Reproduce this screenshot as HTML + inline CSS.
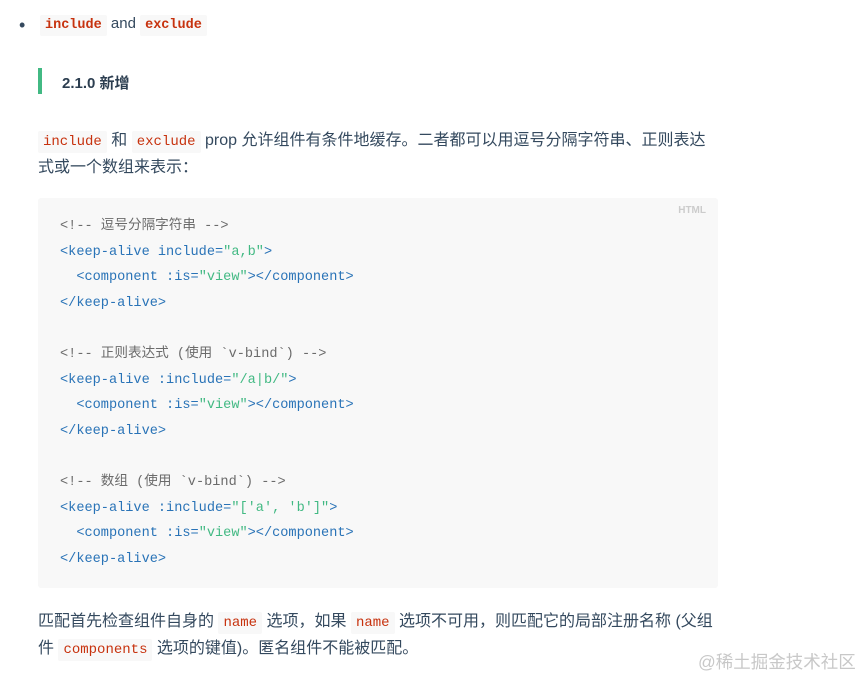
<!DOCTYPE html>
<html><head><meta charset="utf-8"><style>
body{margin:0;width:864px;height:676px;background:#fff;position:relative;font-family:"Liberation Sans","Noto Sans CJK SC",sans-serif;color:#34495e;overflow:hidden}
.a{position:absolute;white-space:nowrap}
code{font-family:"Liberation Mono",monospace;font-size:13.5px;color:#c7320e;background:#f8f8f8;padding:3px 5px;border-radius:2px}
.p{font-size:16px;line-height:26px}
.p code{font-size:14px}
pre{position:absolute;left:38px;top:198px;width:680px;height:390px;margin:0;background:#f8f8f8;border-radius:3px;font-family:"Liberation Mono","Noto Sans CJK SC",monospace;font-size:13.6px;line-height:25.6px;color:#525252;padding:0;box-sizing:border-box}
pre div{position:absolute;left:22px;top:16px;white-space:pre}
.c{color:#6b6b6b}.k{color:#2973b7}.s{color:#42b983}
</style></head><body>
<div class="a" style="left:19px;top:15px;font-size:18px">•</div>
<div class="a" style="left:40px;top:14px;font-size:15px;line-height:20px"><code style="font-weight:bold">include</code> and <code style="font-weight:bold">exclude</code></div>
<div class="a" style="left:38px;top:68px;width:4px;height:26px;background:#42b983"></div>
<div class="a" style="left:62px;top:72px;font-size:15px;font-weight:bold;color:#2c3e50">2.1.0 新增</div>
<div class="a p" style="left:38px;top:128px"><code>include</code> 和 <code>exclude</code> prop 允许组件有条件地缓存。二者都可以用逗号分隔字符串、正则表达<br>式或一个数组来表示：</div>
<pre><span class="a" style="right:12px;top:7px;font-family:'Liberation Sans',sans-serif;font-size:10px;font-weight:bold;color:#ccc;line-height:12px">HTML</span><div><span class="c">&lt;!-- 逗号分隔字符串 --&gt;</span>
<span class="k">&lt;keep-alive include=</span><span class="s">"a,b"</span><span class="k">&gt;</span>
<span class="k">  &lt;component :is=</span><span class="s">"view"</span><span class="k">&gt;&lt;/component&gt;</span>
<span class="k">&lt;/keep-alive&gt;</span>

<span class="c">&lt;!-- 正则表达式 (使用 `v-bind`) --&gt;</span>
<span class="k">&lt;keep-alive :include=</span><span class="s">"/a|b/"</span><span class="k">&gt;</span>
<span class="k">  &lt;component :is=</span><span class="s">"view"</span><span class="k">&gt;&lt;/component&gt;</span>
<span class="k">&lt;/keep-alive&gt;</span>

<span class="c">&lt;!-- 数组 (使用 `v-bind`) --&gt;</span>
<span class="k">&lt;keep-alive :include=</span><span class="s">"['a', 'b']"</span><span class="k">&gt;</span>
<span class="k">  &lt;component :is=</span><span class="s">"view"</span><span class="k">&gt;&lt;/component&gt;</span>
<span class="k">&lt;/keep-alive&gt;</span></div></pre>
<div class="a p" style="left:38px;top:609px">匹配首先检查组件自身的 <code>name</code> 选项，如果 <code>name</code> 选项不可用，则匹配它的局部注册名称 (父组<br>件 <code>components</code> 选项的键值)。匿名组件不能被匹配。</div>
<div class="a" style="left:698px;top:649px;font-size:17.5px;color:#c8c8c8">@稀土掘金技术社区</div>
</body></html>
